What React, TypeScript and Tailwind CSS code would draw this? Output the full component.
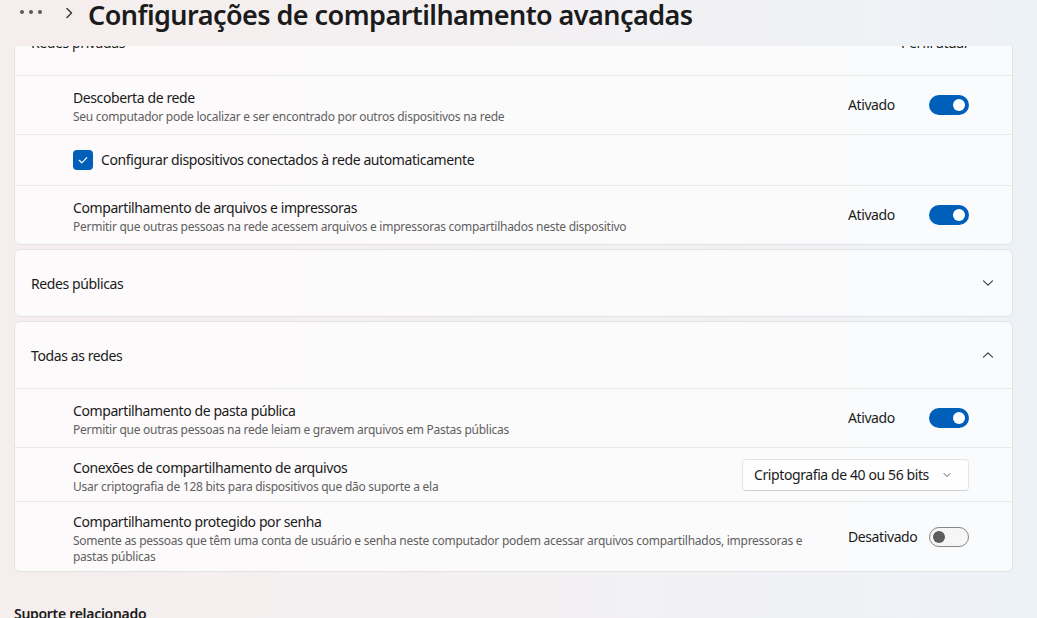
import type { ReactNode } from "react";

const font = { fontFamily: '"Segoe UI", "Noto Sans", sans-serif' };

function Toggle({ on }: { on: boolean }) {
  if (on) {
    return (
      <div className="w-10 h-5 rounded-full bg-[#005fb8] flex items-center justify-end pr-[4px]">
        <div className="w-3 h-3 rounded-full bg-white" />
      </div>
    );
  }
  return (
    <div className="w-10 h-5 rounded-full border border-[#868686] bg-[#f3f3f3]/60 flex items-center pl-[3px]">
      <div className="w-3 h-3 rounded-full bg-[#5d5d5d]" />
    </div>
  );
}

function ToggleSetting({ on }: { on: boolean }) {
  return (
    <div className="flex items-center shrink-0">
      <span className="w-[81px] text-sm tracking-[-0.4px] text-[#1b1b1b]">{on ? "Ativado" : "Desativado"}</span>
      <Toggle on={on} />
    </div>
  );
}

function Chevron({ up }: { up?: boolean }) {
  return (
    <svg width="12" height="12" viewBox="0 0 12 12" className="text-[#3a3a3a]">
      <path
        d={up ? "M1.5 8.2 6 3.8l4.5 4.4" : "M1.5 3.8 6 8.2l4.5-4.4"}
        fill="none"
        stroke="currentColor"
        strokeWidth="1.1"
        strokeLinecap="round"
        strokeLinejoin="round"
      />
    </svg>
  );
}

function Row({
  title,
  desc,
  height,
  right,
}: {
  title: string;
  desc: string;
  height: string;
  right: ReactNode;
}) {
  return (
    <div className={`flex items-center border-t border-[#e8e8e8] pl-[58px] pr-[43px] ${height}`}>
      <div className="flex-1 pr-8 pt-[3px]">
        <p className="text-sm leading-5 tracking-[-0.4px] text-[#1b1b1b]">{title}</p>
        <p className="text-xs leading-4 tracking-[-0.26px] text-[#5f5f5f] pt-[1px]">{desc}</p>
      </div>
      {right}
    </div>
  );
}

function Header({ title, up, extra }: { title: string; up?: boolean; extra?: string }) {
  return (
    <div className="flex items-center h-[66px] pl-4 pr-[18px]">
      <span className="flex-1 pt-[2px] text-sm tracking-[-0.4px] text-[#1b1b1b]">{title}</span>
      {extra && <span className="pt-[2px] text-sm tracking-[-0.4px] text-[#1b1b1b] mr-[15px]">{extra}</span>}
      <Chevron up={up} />
    </div>
  );
}

export default function App() {
  return (
    <div
      className="w-[1037px] h-[618px] overflow-hidden flex flex-col bg-linear-to-r from-[#f6eeed] via-[#f3f0f2] to-[#edf2f7]"
      style={font}
    >
      <div className="h-[46px] shrink-0 flex items-start pl-5">
        <div className="flex gap-[5px] mt-[10px]">
          <span className="w-[4px] h-[4px] rounded-full bg-[#5a5a5a]" />
          <span className="w-[4px] h-[4px] rounded-full bg-[#5a5a5a]" />
          <span className="w-[4px] h-[4px] rounded-full bg-[#5a5a5a]" />
        </div>
        <svg width="10" height="12" viewBox="0 0 10 12" className="ml-[22px] mt-[7px] text-[#3a3a3a]">
          <path d="M3 1.5 7.5 6 3 10.5" fill="none" stroke="currentColor" strokeWidth="1.5" strokeLinecap="round" strokeLinejoin="round" />
        </svg>
        <h1 className="ml-[14px] text-[27px] leading-[30px] font-semibold text-[#1b1b1b] tracking-[-0.55px]">
          Configurações de compartilhamento avançadas
        </h1>
      </div>

      <div className="flex-1 overflow-hidden pl-[14px] pr-[24px]">
        <div className="-mt-[38px] flex flex-col gap-[4px]">
          <div className="rounded-md border border-[#e3e3e3] bg-white/70">
            <Header title="Redes privadas" up extra="Perfil atual" />
            <Row
              title="Descoberta de rede"
              desc="Seu computador pode localizar e ser encontrado por outros dispositivos na rede"
              height="h-[59px]"
              right={<ToggleSetting on />}
            />
            <div className="flex items-center h-[51px] border-t border-[#e8e8e8] pl-[58px]">
              <div className="w-5 h-5 rounded-[4px] bg-[#005fb8] flex items-center justify-center">
                <svg width="12" height="12" viewBox="0 0 12 12">
                  <path d="M2.2 6.3 4.8 8.8 9.8 3.6" fill="none" stroke="white" strokeWidth="1.2" strokeLinecap="round" strokeLinejoin="round" />
                </svg>
              </div>
              <span className="ml-2 text-sm tracking-[-0.4px] text-[#1b1b1b]">
                Configurar dispositivos conectados à rede automaticamente
              </span>
            </div>
            <Row
              title="Compartilhamento de arquivos e impressoras"
              desc="Permitir que outras pessoas na rede acessem arquivos e impressoras compartilhados neste dispositivo"
              height="h-[59px]"
              right={<ToggleSetting on />}
            />
          </div>

          <div className="rounded-md border border-[#e3e3e3] bg-white/70">
            <Header title="Redes públicas" />
          </div>

          <div className="rounded-md border border-[#e3e3e3] bg-white/70">
            <Header title="Todas as redes" up />
            <Row
              title="Compartilhamento de pasta pública"
              desc="Permitir que outras pessoas na rede leiam e gravem arquivos em Pastas públicas"
              height="h-[59px]"
              right={<ToggleSetting on />}
            />
            <Row
              title="Conexões de compartilhamento de arquivos"
              desc="Usar criptografia de 128 bits para dispositivos que dão suporte a ela"
              height="h-[54px]"
              right={
                <div className="flex items-center h-[32px] w-[227px] rounded-[4px] border border-[#e5e5e5] border-b-[#d0d0d0] bg-white/80 pl-[11px] pr-[16px] shrink-0">
                  <span className="flex-1 text-sm tracking-[-0.4px] text-[#1b1b1b]">Criptografia de 40 ou 56 bits</span>
                  <svg width="10" height="10" viewBox="0 0 10 10" className="text-[#5a5a5a]">
                    <path d="M2 3.5 5 6.5 8 3.5" fill="none" stroke="currentColor" strokeWidth="1" strokeLinecap="round" strokeLinejoin="round" />
                  </svg>
                </div>
              }
            />
            <Row
              title="Compartilhamento protegido por senha"
              desc="Somente as pessoas que têm uma conta de usuário e senha neste computador podem acessar arquivos compartilhados, impressoras e pastas públicas"
              height="h-[70px]"
              right={<ToggleSetting on={false} />}
            />
          </div>

          <h2 className="mt-[28px] text-sm font-semibold tracking-[-0.3px] text-[#1b1b1b]">Suporte relacionado</h2>
        </div>
      </div>
    </div>
  );
}
